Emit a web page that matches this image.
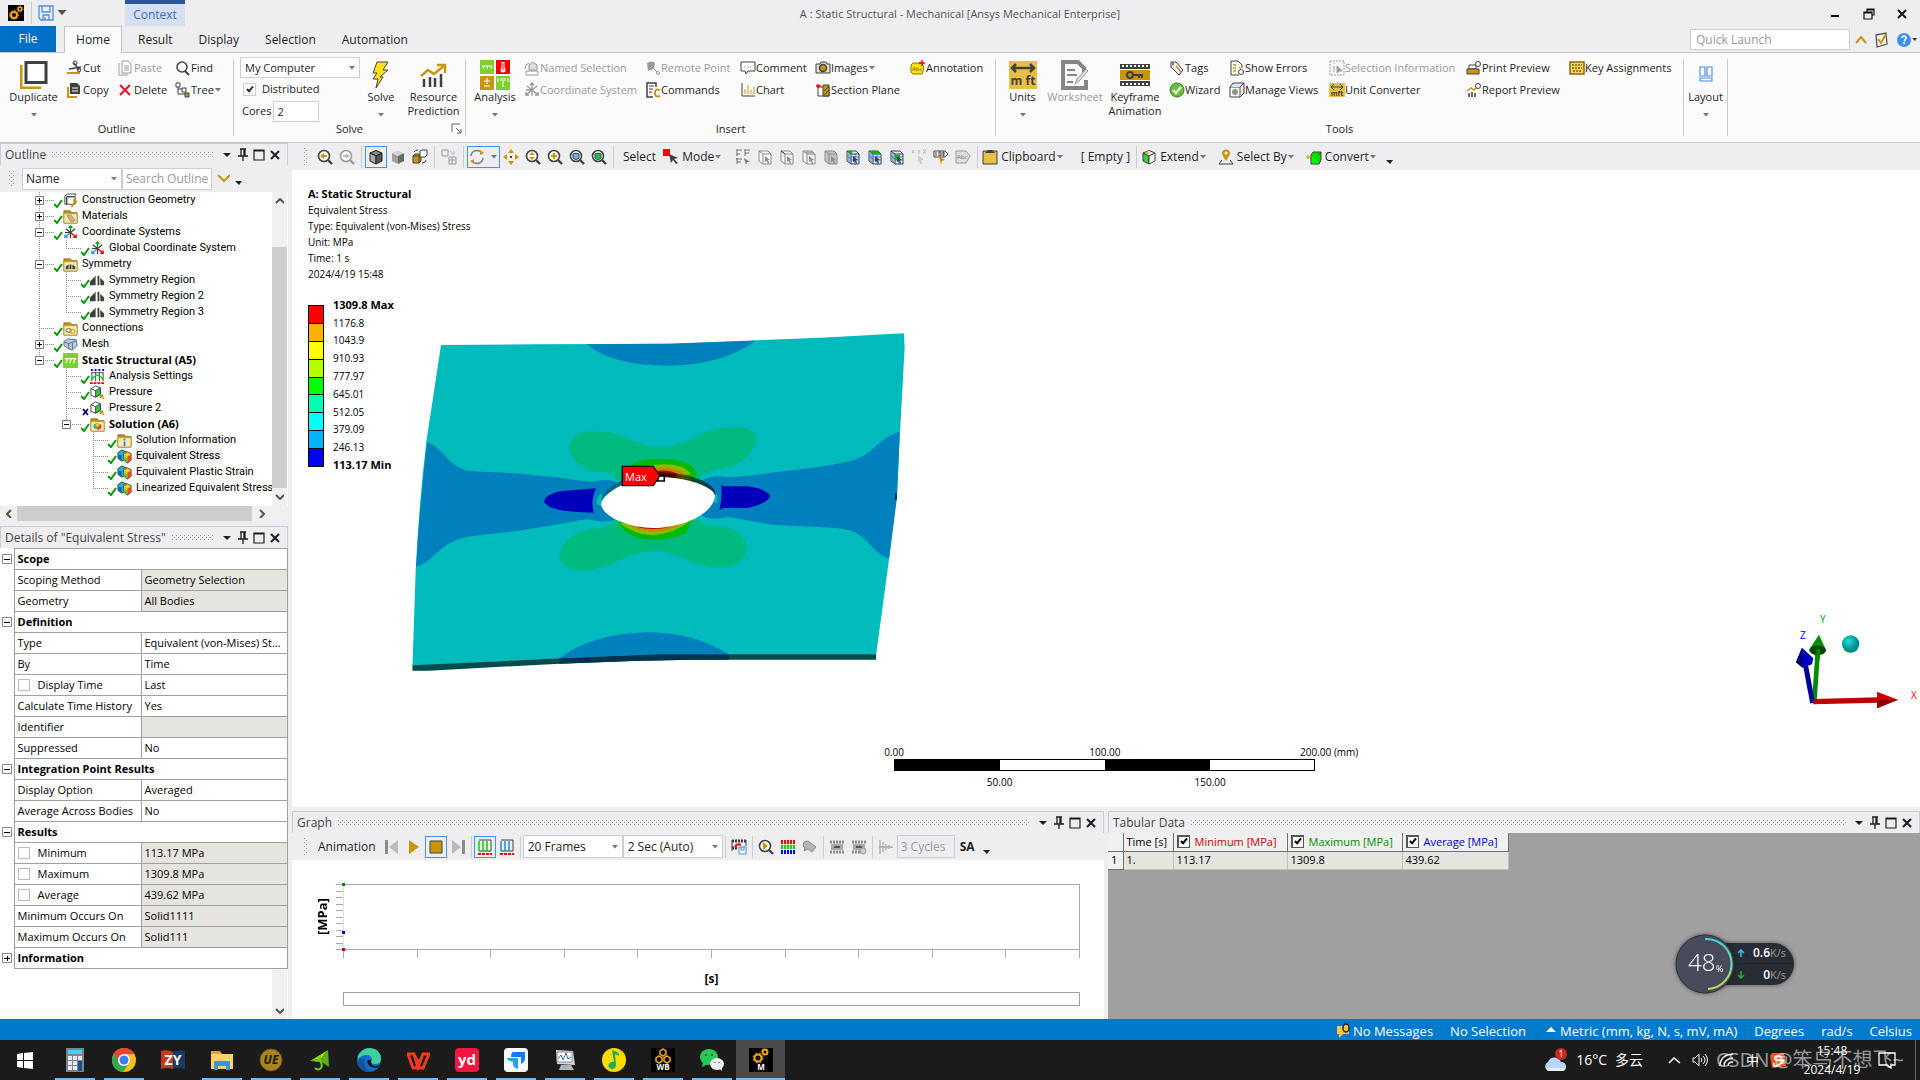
<!DOCTYPE html>
<html lang="en">
<head>
<meta charset="utf-8">
<title>A : Static Structural - Mechanical</title>
<style>
    html, body
    {
        height          : 100%;
        margin          : 0;
    }

    body
    {
        display         : flex;
        flex-direction  : column;
        overflow        : hidden;
        background      : #eeeef0;
        color           : #1e1e1e;
        font            : 11px/14px "Open Sans", "Noto Sans CJK SC", sans-serif;
    }

    main
    {
        flex            : 1;
        min-height      : 0;
        display         : grid;
        grid-template-columns : 288px minmax(0, 1fr);
    }

    .side, .work
    {
        display         : flex;
        flex-direction  : column;
        min-height      : 0;
    }

    .side { gap: 5px; }
    .side dock-panel:last-child { flex: 1; }
    .work { margin-left: 4px; }
    .work stress-view { flex: 1; }

    .bottom
    {
        height          : 208px;
        margin-top      : 4px;
        display         : grid;
        grid-template-columns : 1fr 1fr;
        gap             : 4px;
    }
</style>
</head>
<body>
<title-bar></title-bar>
<ribbon-bar>
    <ribbon-group label="Outline">
        <ribbon-stack style="width:67px"><ribbon-button big menu icon="duplicate">Duplicate</ribbon-button></ribbon-stack>
        <ribbon-stack style="width:51px"><ribbon-button icon="cut">Cut</ribbon-button><ribbon-button icon="copy">Copy</ribbon-button></ribbon-stack>
        <ribbon-stack style="width:57px"><ribbon-button off icon="paste">Paste</ribbon-button><ribbon-button icon="del">Delete</ribbon-button></ribbon-stack>
        <ribbon-stack style="width:58px"><ribbon-button icon="find">Find</ribbon-button><ribbon-button menu icon="tree">Tree</ribbon-button></ribbon-stack>
    </ribbon-group>
    <ribbon-group label="Solve" launcher>
        <solve-options></solve-options>
        <ribbon-stack style="width:42px"><ribbon-button big menu icon="solve">Solve</ribbon-button></ribbon-stack>
        <ribbon-stack style="width:63px"><ribbon-button big icon="resource">Resource Prediction</ribbon-button></ribbon-stack>
    </ribbon-group>
    <ribbon-group label="Insert">
        <ribbon-stack style="width:58px"><ribbon-button big menu icon="analysis">Analysis</ribbon-button></ribbon-stack>
        <ribbon-stack style="width:121px"><ribbon-button off icon="named">Named Selection</ribbon-button><ribbon-button off icon="coordOff">Coordinate System</ribbon-button></ribbon-stack>
        <ribbon-stack style="width:95px"><ribbon-button off icon="remote">Remote Point</ribbon-button><ribbon-button icon="commands">Commands</ribbon-button></ribbon-stack>
        <ribbon-stack style="width:75px"><ribbon-button icon="comment">Comment</ribbon-button><ribbon-button icon="chart">Chart</ribbon-button></ribbon-stack>
        <ribbon-stack style="width:95px"><ribbon-button menu icon="camera">Images</ribbon-button><ribbon-button icon="section">Section Plane</ribbon-button></ribbon-stack>
        <ribbon-stack style="width:85px"><ribbon-button icon="annot">Annotation</ribbon-button></ribbon-stack>
    </ribbon-group>
    <ribbon-group label="Tools">
        <ribbon-stack style="width:53px"><ribbon-button big menu icon="units">Units</ribbon-button></ribbon-stack>
        <ribbon-stack style="width:52px"><ribbon-button big off icon="worksheet">Worksheet</ribbon-button></ribbon-stack>
        <ribbon-stack style="width:68px"><ribbon-button big icon="keyframe">Keyframe Animation</ribbon-button></ribbon-stack>
        <ribbon-stack style="width:60px"><ribbon-button icon="tags">Tags</ribbon-button><ribbon-button icon="wizard">Wizard</ribbon-button></ribbon-stack>
        <ribbon-stack style="width:100px"><ribbon-button icon="errors">Show Errors</ribbon-button><ribbon-button icon="views">Manage Views</ribbon-button></ribbon-stack>
        <ribbon-stack style="width:137px"><ribbon-button off icon="selinfo">Selection Information</ribbon-button><ribbon-button icon="convertu">Unit Converter</ribbon-button></ribbon-stack>
        <ribbon-stack style="width:103px"><ribbon-button icon="print">Print Preview</ribbon-button><ribbon-button icon="report">Report Preview</ribbon-button></ribbon-stack>
        <ribbon-stack style="width:114px"><ribbon-button icon="keys">Key Assignments</ribbon-button></ribbon-stack>
    </ribbon-group>
    <ribbon-group label="">
        <ribbon-stack style="width:43px"><ribbon-button big menu icon="layout">Layout</ribbon-button></ribbon-stack>
    </ribbon-group>
</ribbon-bar>
<main>
    <div class="side">
        <dock-panel label="Outline"><outline-tree></outline-tree></dock-panel>
        <dock-panel label='Details of "Equivalent Stress"'><details-grid></details-grid></dock-panel>
    </div>
    <div class="work">
        <view-toolbar></view-toolbar>
        <stress-view></stress-view>
        <div class="bottom">
            <dock-panel label="Graph"><graph-view></graph-view></dock-panel>
            <dock-panel label="Tabular Data"><tabular-data></tabular-data></dock-panel>
        </div>
    </div>
</main>
<status-bar></status-bar>
<task-bar></task-bar>
<speed-meter></speed-meter>

<script>
const G = '#c8960c', K = '#404040', X = '#9a9a9a';
const lens = (inner, c = K) => `<circle cx="7" cy="7" r="5.5" fill="#fff" stroke="${c}" stroke-width="1.6"/><path d="M11 11l4 4" stroke="${c}" stroke-width="2.4"/>${inner}`;
const cube = (a, b, c, s = K) => `<path d="M2 4l6-2.500 6 2.500-6 3z" fill="${a}" stroke="${s}"/><path d="M2 4l6 3v8l-6-3z" fill="${b}" stroke="${s}"/><path d="M14 4l-6 3v8l6-3z" fill="${c}" stroke="${s}"/>`;
const folder = inner => `<path d="M1 4V2h7l1 2h6v11H1z" fill="#c8960c" stroke="#8a6808"/><path d="M1 5h14v10H1z" fill="#f8eab0" stroke="#b8a050"/>${inner}`;
const pick = (fill, extra = '', s = '#8c8c8c') => `<path d="M2 2h9l3 3v10H6l-4-3z" fill="${fill}" stroke="${s}"/><path d="M2 2l4 3h8M6 5v10" fill="none" stroke="${s}"/>${extra}<path d="M8 7l5 4h-2l1 3-1 1-1-3-2 1z" fill="${s}"/>`;
const mesh = extra => pick('#d8e8ff', `<path d="M10 5v10M6 8h8M6 11h8M4 4v9M2 7l4 3" stroke="#3a7bd5" fill="none"/>${extra}`, K);
const gears = `<path fill="#000" d="M0 0h16v16H0z"/><circle cx="6" cy="10" r="3" fill="none" stroke="#f5a81c" stroke-width="2"/><circle cx="6" cy="10" r="4.500" fill="none" stroke="#f5a81c" stroke-dasharray="1.500 1.500"/><circle cx="12" cy="4" r="1.800" fill="none" stroke="#f5a81c" stroke-width="1.500"/><circle cx="12" cy="4" r="3" fill="none" stroke="#f5a81c" stroke-dasharray="1 1"/>`;
const star = (a, b, c, d) => `<path d="M8 8V1M6 3l2-2 2 2" stroke="${a}" fill="none" stroke-width="1.500"/><path d="M8 8l6 5M14 10v3h-3" stroke="${b}" fill="none" stroke-width="1.500"/><path d="M8 8l-6 5M2 10v3h3" stroke="${c}" fill="none" stroke-width="1.500"/><path d="M8 8L3 4M8 8l5-4M8 8v6M8 8H2" stroke="${d}" stroke-width="1.300"/>`;

/* every glyph sits on a 16 x 16 grid unless its entry names another box */
const ICONS = {
    app       : gears,
    save      : `<path d="M1 1h14v14H3l-2-2zM4 1v6h8V1M5 15v-5h6v5M7 12v3" fill="none" stroke="#4a90e2" stroke-width="1.300"/>`,
    duplicate : [28, 28, `<path d="M1 4v23h20" fill="none" stroke="${G}" stroke-width="3"/><path d="M6 1.500h20v20H6z" fill="#fff" stroke="${K}" stroke-width="3"/>`],
    cut       : `<path d="M0 13h13" stroke="${G}" stroke-width="2"/><path d="M2 9l12-2M7 3l5 7" stroke="${K}" stroke-width="1.500"/><circle cx="8" cy="3" r="2" fill="none" stroke="${K}"/><circle cx="12" cy="10" r="1.800" fill="none" stroke="${K}"/>`,
    copy      : `<path d="M1 5v10h9" fill="none" stroke="${G}" stroke-width="2"/><path d="M3 1h7l3 3v8H3z" fill="${K}"/><path d="M5 6h6M5 9h6" stroke="#fff"/>`,
    paste     : `<path d="M1 3v12h9" fill="none" stroke="#ccc" stroke-width="2"/><path d="M4 1h6l3 3v9H4z" fill="#fff" stroke="${X}"/><path d="M6 6h5M6 8h5M6 10h5" stroke="${X}"/>`,
    del       : `<path d="M2 3l10 10M12 3L2 13" stroke="#e81123" stroke-width="2"/>`,
    find      : `<circle cx="7" cy="7" r="5" fill="none" stroke="${K}" stroke-width="1.500"/><path d="M10 11l4 4" stroke="${K}" stroke-width="2"/>`,
    tree      : `<path d="M3 3v9h8M3 7h5" fill="none" stroke="${K}"/><path d="M1 1h4v4H1zM7 6h4v4H7z" fill="#fff" stroke="${K}"/><path d="M10 11h4v4h-4z" fill="${G}" stroke="${K}"/>`,
    solve     : [24, 28, `<path d="M8 1h11l-5 8h5l-8 7h3L7 27l2-9H4l4-6H4z" fill="#ffe11a" stroke="${K}"/>`],
    resource  : [28, 28, `<path d="M4 26v-8M10 26V16M15 26V17M21 26V13" stroke="${K}" stroke-width="2.500"/><path d="M1 15l7-6 6 4L25 4M17 4h8v8" fill="none" stroke="${G}" stroke-width="2.500"/>`],
    analysis  : [32, 30, `<path fill="#7bd12f" d="M1 0h14v14H1zM17 16h14v14H17z"/><path fill="#f80000" d="M17 0h14v14H17z"/><path fill="${G}" d="M1 16h14v14H1z"/><path d="M3 6h10M5 6l-1 3M9 6L8 9M13 6l-1 3M5 21h6M8 18v6M5 26h6M19 18v4M22 18v3M26 18v3M29 18v4M24 18v9" stroke="#fff" fill="none"/><path d="M24 2v7" stroke="#fff" stroke-width="3"/><circle cx="24" cy="10" r="2.500" fill="#fff"/><path d="M24 3v7" stroke="#f80000"/>`],
    named     : `<path d="M5 5l4-3 4 3v5H5z" fill="#ddd" stroke="${X}"/><path d="M2 11h12v4H2z" fill="#fff" stroke="${X}"/><path d="M1 9q0-5 4-6" fill="none" stroke="${X}"/>`,
    coordOff  : star(X, X, X, X),
    remote    : `<path d="M2 3q5-3 8 0L9 9l-6 2z" fill="${X}"/><path d="M8 8l4 4" stroke="${X}"/><circle cx="13" cy="13" r="1.500" fill="none" stroke="${X}"/>`,
    commands  : `<path d="M8 15H2V1h9v4" fill="none" stroke="${K}" stroke-width="1.500"/><path d="M4 4h5M4 7h4M4 10h3" stroke="${K}"/><path d="M15 8q-5-2-5 3t5 3" fill="none" stroke="${G}" stroke-width="2"/>`,
    comment   : `<path d="M1 2h14v9H8l-2 3-1-3H1z" fill="#fff" stroke="${K}"/><path d="M4 7h8" stroke="${G}" stroke-dasharray="1 2"/>`,
    chart     : `<path d="M2 1v13h13" fill="none" stroke="${K}"/><path d="M5 12V7M8 12V3M11 12V8M14 12V5" stroke="${G}"/>`,
    camera    : `<path d="M1 4h4l1-2h5l1 2h3v9H1z" fill="#ddd" stroke="${K}"/><circle cx="8" cy="8" r="3.500" fill="${G}" stroke="${K}" stroke-width="1.500"/>`,
    section   : `<path d="M3 5h11v9H3z" fill="#fff" stroke="${K}"/><path d="M8 3h6v11H8z" fill="${G}" stroke="${K}"/><path d="M9 9l5-5M9 13l5-5" stroke="${K}"/><path d="M1 4h5M3 2v4" stroke="#f00" stroke-width="1.500"/>`,
    annot     : `<path d="M1 5l2-2h9l2 5-2 6H3l-2-2z" fill="#fce205" stroke="#8a7a00"/><path d="M9 3h6M12 0v6" stroke="#f00" stroke-width="1.500"/><text x="2" y="11" font-size="6" fill="#665500">Abc</text>`,
    units     : [28, 28, `<path fill="#e8bf45" d="M0 0h28v28H0z"/><path d="M3 7h22M7 3L3 7l4 4M21 3l4 4-4 4" fill="none" stroke="${K}" stroke-width="2.500"/><text x="14" y="24" text-anchor="middle" font-size="12" font-weight="700" fill="${K}">m ft</text>`],
    worksheet : [30, 30, `<path d="M26 20v8H3V2h15l6 6v5" fill="none" stroke="#858585" stroke-width="4"/><path d="M7 10h8M7 15h10M7 22h6" stroke="#858585" stroke-width="2"/><path d="M15 24l2-5 9-10 2 2-9 10z" fill="#ddd" stroke="${X}"/>`],
    keyframe  : [30, 28, `<path fill="${K}" d="M0 3h30v5H0zM0 20h30v5H0z"/><path fill="${G}" d="M0 9h30v10H0z"/><path d="M2 5h27M2 23h27" stroke="#fff" stroke-width="2" stroke-dasharray="2 2"/><circle cx="10" cy="14" r="3" fill="none" stroke="${K}" stroke-width="2"/><path d="M13 14h9v3M19 14v3" fill="none" stroke="${K}" stroke-width="2"/>`],
    tags      : `<path d="M2 2h5l7 8-4 5-8-8z" fill="#eee" stroke="${K}"/><path d="M7 6l5 6" stroke="${G}" stroke-width="1.500"/><circle cx="4" cy="4" r="1" fill="${K}"/>`,
    wizard    : `<circle cx="8" cy="8" r="7" fill="#6abf3a" stroke="#3d7a1c"/><path d="M4 8l3 3 5-6" fill="none" stroke="#fff" stroke-width="2"/>`,
    errors    : `<path d="M10 15H2V1h7l4 4v3" fill="#fff" stroke="${K}"/><path d="M4 5h3M4 8h3M4 11h3" stroke="${G}" stroke-width="1.500"/><circle cx="12" cy="12" r="2.500" fill="#fff" stroke="${K}"/><path d="M10 7l3 3" stroke="${G}"/>`,
    views     : `<path d="M1 5h10v10H1z" fill="#fff" stroke="${K}"/><path d="M1 5l3-4h11l-4 4M15 1v10l-4 4" fill="#d8e6f8" stroke="${K}"/><circle cx="6" cy="10" r="2.500" fill="${G}" stroke="#4a90e2"/>`,
    selinfo   : `<path d="M1 1h14v14H1z" fill="none" stroke="${X}" stroke-dasharray="2 1"/><path d="M5 6v6M5 3v1M8 6l5 5h-3l-2 2z" stroke="${X}" fill="${X}"/>`,
    convertu  : `<path fill="#e8bf45" d="M0 1h16v14H0z"/><path d="M2 5h12M5 2L2 5l3 3M11 2l3 3-3 3" fill="none" stroke="${K}"/><text x="8" y="14" text-anchor="middle" font-size="7" font-weight="700" fill="${K}">mft</text>`,
    print     : `<path d="M3 5h7v4H3z" fill="#fff" stroke="${K}"/><path d="M1 9h12v5H1z" fill="${G}" stroke="${K}"/><circle cx="12" cy="4" r="2.500" fill="#fff" stroke="${K}"/>`,
    report    : `<path d="M3 15v-4M6 15v-5M9 15v-4" stroke="${K}" stroke-width="1.500"/><path d="M1 9l4-3 3 2 5-5" fill="none" stroke="${G}" stroke-width="1.500"/><circle cx="12" cy="4" r="2.500" fill="#fff" stroke="${K}"/>`,
    keys      : `<path d="M1 2h14v12H1z" fill="#f5d06a" stroke="#8a6808" stroke-width="1.500"/><path d="M3 5h10M3 8h10M4 11h8" stroke="#8a6808" stroke-width="1.500" stroke-dasharray="2 1"/>`,
    layout    : [28, 28, `<path d="M8 6h5v9H8zM15 6h5v9h-5zM8 17h12v3H8z" fill="none" stroke="#4a90e2" stroke-width="1.200"/>`],
    launcher  : `<path d="M3 12V4h8M7 8l5 5M12 9v4H8" fill="none" stroke="#666"/>`,
    caret     : [8, 8, `<path d="M1 2h6L4 5.500z" fill="currentColor"/>`],
    pin       : `<path d="M5 2h6M6 2v7M10 2v7M9 2v7M3 9h10M8 9v5" stroke="currentColor" fill="none" stroke-width="1.300"/>`,
    box       : `<path d="M3 3h10v10H3zM3 4h10" fill="none" stroke="currentColor" stroke-width="1.200"/>`,
    close     : `<path d="M4 4l8 8M12 4l-8 8" stroke="currentColor" stroke-width="2"/>`,
    drop      : `<path d="M4 6h8l-4 4z" fill="currentColor"/>`,
    zback     : lens(`<path d="M3 7l4-3v2h3v2H7v2z" fill="${G}"/>`),
    zfwd      : lens(`<path d="M11 7L7 4v2H4v2h3v2z" fill="#bbb"/>`, '#999'),
    shaded    : cube('#888', '#aaa', '#555', '#222'),
    shaded2   : cube('#d4d4d4', '#a0a0a0', '#6a6a6a', 'none'),
    random    : `<path d="M1 7l2-2h6v7l-2 2H1z" fill="${G}" stroke="${K}"/><path d="M1 7h6v7M7 7l2-2" fill="none" stroke="${K}"/><path d="M8 2l2-1h5v5l-2 2H8z" fill="#fff" stroke="${K}"/><path d="M2 3q1-2 4-2M10 14q4 0 4-3" fill="none" stroke="${K}"/>`,
    layers    : `<path d="M1 1h6v6H1zM8 8h7v7H8zM11 8v7M8 11h7" fill="none" stroke="${X}"/><path d="M9 2l4 3M13 2v3h-3" stroke="#bbb" fill="none"/>`,
    rotate    : `<path d="M2 7A6 6 0 0 1 12 3M14 9A6 6 0 0 1 4 13" fill="none" stroke="#777" stroke-width="1.500"/><path d="M11 1l4 3-4 2zM5 15l-4-3 4-2z" fill="${G}"/>`,
    pan       : `<path d="M8 0l3 4H5zM8 16l3-4H5zM0 8l4-3v6zM16 8l-4-3v6z" fill="${G}"/><path d="M7 7h2v2H7z" fill="${K}"/>`,
    zoom      : lens(`<path d="M7 3l3 3H4zM7 11l3-3H4z" fill="${G}"/>`),
    zin       : lens(`<path d="M7 4v6M4 7h6" stroke="${G}" stroke-width="2"/>`),
    zfit      : lens(`<path d="M4 5l3-1 3 1v4l-3 2-3-2z" fill="#7aa6dc" stroke="#345"/>`),
    zsel      : lens(`<path d="M4 5l3-1 3 1v4l-3 2-3-2z" fill="#22c14c" stroke="#253"/>`),
    mode      : `<path fill="#f00" d="M0 0h7v7H0z"/><path d="M6 5l9 4-4 1 4 4-2 1-3-4-2 3z" fill="${K}"/>`,
    pickAll   : `<path d="M1 1h6M1 5h4M2 1v6M9 1h6M10 1v6M10 4h4M1 10h6M2 9v6M2 13h4" stroke="#777" fill="none"/><path d="M9 9l6 4h-3l-1 3z" fill="#777"/>`,
    pick1     : pick('#fafafa'),
    pick2     : pick('#f2f2f2', `<path d="M2 2l4 3" stroke="${K}"/>`),
    pick3     : pick('#f2f2f2', `<path d="M2 2h9l3 3H6z" fill="#aaa"/>`),
    pick4     : pick('#c2c2c2'),
    mesh1     : mesh(`<path fill="#0b0" d="M2 2h5v3H5z"/>`),
    mesh2     : mesh(`<path fill="#0b0" d="M2 2h9l3 3H6z"/>`),
    mesh3     : mesh(`<path fill="#0b0" d="M6 6h5v5H6z"/>`),
    xyz       : `<path d="M1 1l2 3M3 1L1 4M7 1l1 2 1-2M8 3v2M12 1h3l-3 3h3" fill="none" stroke="#bbb"/><path d="M7 6l6 5h-3l1 4h-2l-1-3-1 1z" fill="#ccc"/>`,
    label     : `<path d="M1 2h11l3 3-3 3H1z" fill="#fff" stroke="${K}"/><path d="M3 3v4M6 3h2v4H6zM10 3h1v4h-1z" stroke="${K}" fill="none"/><path d="M6 7l6 4-3 1-1 4z" fill="${G}"/>`,
    abc       : `<path d="M1 2h10l4 5-4 7H1z" fill="#ddd" stroke="${X}"/><text x="2" y="10" font-size="6" fill="#777">Abc</text>`,
    clipboard : `<path d="M1 2h14v13H1z" fill="#e8bf45" stroke="${K}"/><path d="M3 4l3-3h4l3 3z" fill="${K}"/>`,
    extend    : cube('#fff', '#2fce3f', '#fff') + `<path d="M4 4h5M6 2v4" stroke="${G}"/>`,
    selectby  : `<path d="M8 12Q4 6 4 4a4 3.500 0 0 1 8 0q0 2-4 8z" fill="${G}"/><circle cx="8" cy="4" r="1.500" fill="#fff"/><path d="M4 11l-3 4h14l-3-4" fill="none" stroke="${K}"/>`,
    convert   : `<path d="M5 6h8v9H5z" fill="#0f0" stroke="${K}"/><path d="M5 6l2-3h8v8l-2 4M13 6l2-3" fill="#0d0" stroke="${K}"/><path d="M0 8h5M2 6v4" stroke="${G}"/>`,
    prev      : `<path fill="#8c8c8c" d="M1 1h3v14H1z"/><path fill="#bbb" d="M14 1v14L5 8z"/>`,
    play      : `<path fill="${G}" d="M3 1l10 7-10 7z"/>`,
    stop      : `<path fill="${G}" stroke="${K}" d="M2 2h12v12H2z"/>`,
    next      : `<path fill="#bbb" d="M2 1l9 7-9 7z"/><path fill="#8c8c8c" d="M12 1h3v14h-3z"/>`,
    barsG     : `<path d="M2 1h12M14 1v11H2" stroke="${K}" fill="none"/><path d="M2 2v10M6 2v10M10 2v10" stroke="#00d800" stroke-width="1.500"/><path d="M1 15h14" stroke="#f00" stroke-width="2" stroke-dasharray="3 1"/>`,
    barsB     : `<path d="M2 1h12M14 1v11H2" stroke="${K}" fill="none"/><path d="M2 2v10M6 2v10M10 2v10" stroke="#1c8be0" stroke-width="1.500"/><path d="M1 15h14" stroke="#f00" stroke-width="2" stroke-dasharray="3 1"/>`,
    export    : `<path d="M1 2h14M1 9h5" stroke="${K}" stroke-width="3" stroke-dasharray="2 1"/><path d="M1 1v11M15 1v6" stroke="${K}"/><path d="M4 8q2-4 6-2" stroke="#f00" fill="none" stroke-width="2"/><path d="M8 8h7v7H8zM10 8v3h3V8" fill="#fff" stroke="#4a90e2"/>`,
    zplay     : lens(`<path d="M5 3l5 4-5 4z" fill="${G}"/>`),
    grid3     : `<path d="M1 3h14" stroke="#f00" stroke-width="4" stroke-dasharray="2 1"/><path d="M1 8h14" stroke="#0d0" stroke-width="4" stroke-dasharray="2 1"/><path d="M1 13h14" stroke="#00f" stroke-width="4" stroke-dasharray="2 1"/>`,
    probe     : `<path d="M2 3l4-1 8 6-4 5-4-3-4 2 1-3-2-2z" fill="#b5b5b5" stroke="#888"/>`,
    film      : `<path d="M1 3h14M1 13h14" stroke="#8c8c8c" stroke-width="3" stroke-dasharray="2 1"/><path fill="#aaa" d="M2 5h12v6H2z"/><path d="M5 8h6" stroke="#555" stroke-width="2"/>`,
    filmkey   : `<path d="M1 3h14M1 13h8" stroke="#8c8c8c" stroke-width="3" stroke-dasharray="2 1"/><path fill="#aaa" d="M2 5h12v6H2z"/><path d="M5 8h6" stroke="#555" stroke-width="2"/><circle cx="12" cy="12" r="3" fill="#ccc" stroke="#999"/>`,
    cycles    : `<path d="M2 1v14M1 8h14M5 3v10M8 5v6M11 6v4" stroke="#aaa" stroke-width="1.300"/>`,
    geom      : `<path d="M2 3l3-2h9l-2 3H4v8H2zM4 4h9v8H4z" fill="#fff" stroke="${K}"/><path d="M9 15l4-6M12 6v3h3" stroke="${G}" stroke-width="2" fill="none"/>`,
    materials : folder(`<path d="M4 7l4-1 5 6-4 2z" fill="#e0a878" stroke="#996"/>`),
    coords    : star('#0a0', '#e00', '#39f', K),
    symfolder : folder(`<path fill="${K}" d="M3 13v-3l3-2v5zM7 8h2v5H7zM10 8l3 2v3h-3z"/>`),
    symregion : `<path fill="${K}" d="M0 13V9l6-6v10zM8 3h2v10H8zM11 5l4 4v4h-4z"/>`,
    connect   : folder(`<ellipse cx="6" cy="10" rx="3" ry="2" fill="none" stroke="#665"/><ellipse cx="10" cy="11" rx="3" ry="2" fill="none" stroke="${G}"/>`),
    mesh      : `<path d="M1 5l4-3 9 1 1 6-5 5-5-2-4-3z" fill="#b9cfe8" stroke="#567"/><path d="M1 5l5 2v6M6 7l8-3M10 6v7" fill="none" stroke="#567"/>`,
    structural: `<path fill="#7bd12f" d="M0 0h16v16H0z"/><path d="M2 6h12M5 6l-2 5M9 6l-2 5M13 6l-2 5" stroke="#fff" stroke-width="1.300"/>`,
    settings  : `<path d="M2 3v10M6 3v10M10 3v10M14 3v10M2 4h12" stroke="${K}"/><path d="M2 11q6-9 12 0" fill="none" stroke="#0c0" stroke-width="1.500"/><path d="M1 1h14" stroke="#00f" stroke-width="2" stroke-dasharray="2 2"/><path d="M0 15h16" stroke="#e00" stroke-width="2" stroke-dasharray="3 1"/>`,
    pressure  : `<path d="M1 4l5-3 5 2v7l-5 3-5-2z" fill="#fff" stroke="${K}"/><path d="M6 6l5-3v7l-5 3z" fill="#2fce3f" stroke="${K}"/><path d="M1 4l5 2" stroke="${K}"/><path d="M15 15l-4-4M11 14v-3h3" stroke="${G}" fill="none" stroke-width="1.500"/>`,
    solution  : folder(`<path fill="#2a9" d="M4 8l4-2v7l-4-1z"/><path fill="#e33" d="M8 7l4 1v4l-4 2z"/><path fill="#f1d020" d="M6 7h4v3H6z"/>`),
    info      : folder(`<path d="M8 6v2M8 9v5" stroke="#2a8cff" stroke-width="2"/>`),
    result    : `<path d="M1 4l4-3 5 2v8l-5 2-4-3z" fill="#18b8d0" stroke="${K}"/><path d="M7 5l4-2 4 2v7l-4 3-4-3z" fill="#f1d020" stroke="${K}"/><path d="M11 8v7l4-3V6z" fill="#ea4a20"/><path d="M2 6l3 1v5l-3-2z" fill="#1b50d8"/><path d="M7 8l4 2v4l-4-2z" fill="#5cc838"/>`,
    ok        : [9, 9, `<path d="M0 5l3 3 5-7" fill="none" stroke="#0a960a" stroke-width="2"/>`],
    bad       : [9, 9, `<path d="M2 2l5 6M7 2L2 8" stroke="#00007a" stroke-width="1.800"/>`]
};

function icon(name, w, h)
{
    const def = ICONS[name];
    const [bw, bh, body] = Array.isArray(def) ? def : [16, 16, def];
    return `<svg width="${w || bw}" height="${h || bh}" viewBox="0 0 ${bw} ${bh}" aria-hidden="true">${body}</svg>`;
}

const RESET = `
    :host, *, *::before { box-sizing: border-box; }
    svg { display: block; flex: none; }
    button, input, select { font: inherit; color: inherit; }
    button { border: 0; padding: 0; background: none; }
    input, select { border: 1px solid #ccccdb; border-radius: 0; background: #fff; outline: 0; }
    select { appearance: none; }
`;

class Part extends HTMLElement
{
    connectedCallback()
    {
        if (this.shadowRoot) return;
        this.attachShadow({mode:"open"}).innerHTML = `<style>${RESET}</style>` + this.render();
    }
}

class TitleBar extends Part
{
    render()
    {
        return `
        <style>
            :host { display: block; height: 53px; flex: none; border-bottom: 1px solid #c6c6ca; background: #eeeef0; }
            .top { height: 26px; display: grid; grid-template-columns: 125px 60px 1fr 112px; align-items: center; }
            .quick { display: flex; align-items: center; padding-left: 8px; height: 22px; color: #555; }
            .quick i { width: 1px; height: 22px; background: #ccc; margin: 0 6px 0 7px; }
            .quick .save { margin-right: 2px; }
            .context { align-self: stretch; background: #d5dff1; border-top: 4px solid #2b579a; color: #3a6ab8; text-align: center; line-height: 22px; font-size: 12px; }
            .name { text-align: center; color: #555; padding: 2px 73px 0 0; }
            .win { display: flex; justify-content: space-between; padding: 2px 10px 0 19px; color: #111; }
            .row { display: flex; height: 27px; }
            .row button { height: 27px; font-size: 12px; }
            .tabs { display: flex; flex: 1; gap: 26px; }
            .tabs .file { background: #0070c6; color: #fff; width: 56px; height: 26px; margin-right: -18px; }
            .tabs .home { background: #fbfbfb; border: 1px solid #c6c6ca; border-bottom: 0; width: 58px; margin-right: -10px; }
            .launch { display: flex; align-items: center; gap: 5px; padding-right: 3px; }
            .launch input { width: 160px; height: 21px; padding: 0 5px; font-size: 12px; }
            input::placeholder { color: #999; opacity: 1; }
        </style>
        <div class="top">
            <div class="quick">${icon('app')}<i></i><button class="save" aria-label="Save">${icon('save')}</button>${icon('caret', 12, 12)}</div>
            <div class="context">Context</div>
            <div class="name">A : Static Structural - Mechanical [Ansys Mechanical Enterprise]</div>
            <div class="win">
                <button aria-label="Minimize"><svg width="16" height="16"><path d="M4 10h8" stroke="#111" stroke-width="2"/></svg></button>
                <button aria-label="Restore"><svg width="16" height="16"><path d="M6 6V3h7v6h-2M3 6h8v7H3zM3 7h8M6 4h7" fill="none" stroke="#111" stroke-width="1.200"/></svg></button>
                <button aria-label="Close">${icon('close')}</button>
            </div>
        </div>
        <div class="row">
            <nav class="tabs"><button class="file">File</button><button class="home">Home</button><button>Result</button><button>Display</button><button>Selection</button><button>Automation</button></nav>
            <div class="launch">
                <input placeholder="Quick Launch" aria-label="Quick Launch">
                <svg width="12" height="12"><path d="M1 9l5-6 5 6" fill="none" stroke="#c8960c" stroke-width="2"/></svg>
                <svg width="18" height="16"><path d="M4 3l10-2 1 11-10 3z" fill="none" stroke="#555" stroke-width="1.300"/><path d="M6 7l3 4 5-9" fill="none" stroke="#c8960c" stroke-width="2"/></svg>
                <svg width="22" height="16" viewBox="0 0 22 16"><circle cx="9" cy="8" r="7" fill="#3f8ff0"/><path d="M7 6q0-2 2-2t2 2q0 1-2 3M9 10v2" fill="none" stroke="#fff" stroke-width="1.600"/><path d="M17 6h5l-2 3z" fill="#333"/></svg>
            </div>
        </div>`;
    }
}

class RibbonBar extends Part
{
    render()
    {
        return `
        <style>
            :host { display: flex; height: 90px; flex: none; background: #fbfbfb; border-bottom: 1px solid #c6c6ca; }
        </style>
        <slot></slot>`;
    }
}

class RibbonGroup extends Part
{
    render()
    {
        const label = this.getAttribute('label');
        return `
        <style>
            :host { display: flex; flex-direction: column; position: relative; margin: 6px 0; border-right: 1px solid #c9c9cf; }
            .items { display: flex; height: 62px; }
            .label { text-align: center; line-height: 14px; margin-top: 1px; }
            .launcher { position: absolute; right: 0; bottom: 0; }
        </style>
        <div class="items"><slot></slot></div>
        <div class="label">${label}</div>
        ${this.hasAttribute('launcher') ? `<button class="launcher" aria-label="Open ${label} settings">${icon('launcher')}</button>` : ''}`;
    }
}

class RibbonStack extends Part
{
    render()
    {
        return `
        <style>
            :host { display: flex; flex-direction: column; margin-top: -2px; }
        </style>
        <slot></slot>`;
    }
}

class RibbonButton extends Part
{
    render()
    {
        const big = this.hasAttribute('big');
        const menu = this.hasAttribute('menu') ? `<i>${icon('caret')}</i>` : '';
        return `
        <style>
            :host { display: block; }
            button { display: flex; align-items: center; height: 22px; white-space: nowrap; }
            button.big { width: 100%; height: auto; padding-top: 3px; flex-direction: column; white-space: normal; text-align: center; }
            .pic { height: 30px; display: flex; align-items: center; }
            .big i { margin-top: 7px; }
            i { color: #777; }
            button:disabled { color: #9a9a9a; }
        </style>
        <button class="${big ? 'big' : ''}" ${this.hasAttribute('off') ? 'disabled' : ''}>
            <div class="pic">${icon(this.getAttribute('icon'))}</div>
            <span><slot></slot></span>${menu}
        </button>`;
    }
}

class SolveOptions extends Part
{
    render()
    {
        return `
        <style>
            :host { display: block; width: 126px; padding-left: 6px; margin-top: -2px; }
            .combo { position: relative; }
            select { width: 120px; height: 21px; padding: 0 4px; display: block; }
            .combo svg { position: absolute; right: 4px; top: 7px; color: #777; }
            label { display: flex; align-items: center; height: 22px; gap: 6px; }
            .tick { appearance: none; width: 13px; height: 13px; margin: 0 0 0 3px; position: relative; }
            .tick::before { content: ""; position: absolute; left: 4px; top: 1px; width: 4px; height: 7px; border: solid #333; border-width: 0 2px 2px 0; rotate: 40deg; }
            .cores { gap: 2px; padding-left: 2px; }
            .cores input { width: 46px; height: 21px; padding: 0 3px; }
        </style>
        <div class="combo"><select aria-label="Solve process settings"><option>My Computer</option></select>${icon('caret')}</div>
        <label><input class="tick" type="checkbox" checked>Distributed</label>
        <label class="cores">Cores <input value="2"></label>`;
    }
}

class DockPanel extends Part
{
    render()
    {
        return `
        <style>
            :host { display: flex; flex-direction: column; min-width: 0; min-height: 0; }
            header { height: 22px; flex: none; display: flex; align-items: center; border: 1px solid #ccccdb; border-bottom: 0; padding: 0 4px; color: #444; font-size: 12px; }
            .dots
            {
                flex: 1; height: 5px; margin: 0 5px 0 6px;
                background: conic-gradient(from 270deg at 1px 1px, #999 90deg, transparent 0) 0 0 / 4px 4px,
                            conic-gradient(from 270deg at 1px 1px, #999 90deg, transparent 0) 2px 2px / 4px 4px;
            }
            button { color: #1e1e1e; width: 16px; }
            .body { flex: 1; min-height: 0; display: flex; flex-direction: column; }
        </style>
        <header>${this.getAttribute('label')}<div class="dots"></div>
            <button aria-label="Options">${icon('drop')}</button><button aria-label="Auto hide">${icon('pin')}</button><button aria-label="Maximize">${icon('box')}</button><button aria-label="Close">${icon('close')}</button>
        </header>
        <div class="body"><slot></slot></div>`;
    }
}

/* level, label, icon, expander, bold */
const TREE = [
    [0, 'Construction Geometry', 'geom', '+'],
    [0, 'Materials', 'materials', '+'],
    [0, 'Coordinate Systems', 'coords', '-'],
    [1, 'Global Coordinate System', 'coords'],
    [0, 'Symmetry', 'symfolder', '-'],
    [1, 'Symmetry Region', 'symregion'],
    [1, 'Symmetry Region 2', 'symregion'],
    [1, 'Symmetry Region 3', 'symregion'],
    [0, 'Connections', 'connect'],
    [0, 'Mesh', 'mesh', '+'],
    [0, 'Static Structural (A5)', 'structural', '-', true],
    [1, 'Analysis Settings', 'settings'],
    [1, 'Pressure', 'pressure'],
    [1, 'Pressure 2', 'pressure'],
    [1, 'Solution (A6)', 'solution', '-', true],
    [2, 'Solution Information', 'info'],
    [2, 'Equivalent Stress', 'result'],
    [2, 'Equivalent Plastic Strain', 'result'],
    [2, 'Linearized Equivalent Stress', 'result']
];

class OutlineTree extends Part
{
    isLast(index, level)
    {
        for (let i = index + 1; i < TREE.length; i++)
        {
            if (TREE[i][0] < level) return true;
            if (TREE[i][0] === level) return false;
        }
        return true;
    }

    row([level, label, pic, exp, bold], index)
    {
        const w = 54 + 27 * level;
        let lines = '';
        for (let l = 0; l <= level; l++)
        {
            const x = 39 + 27 * l, last = this.isLast(index, l);
            if (l === level || !last) lines += `M${x}.5 0V${last ? 8 : 16}`;
        }
        const x = 39 + 27 * level;
        const box = exp ? `<path d="M${x - 4}.5 4.500h8v8h-8z" fill="#fff" stroke="#777"/><path d="M${x - 2} 8.500h5${exp === '+' ? `M${x}.5 6v5` : ''}" stroke="#000"/>` : '';
        return `<li class="${bold ? 'bold' : ''} ${label === 'Equivalent Stress' ? 'sel' : ''}">
            <svg width="${w}" height="16"><path d="${lines}M${x} 8.500H${w}" stroke="#888" stroke-dasharray="1 1" fill="none"/>${box}</svg>
            <b>${icon(label === 'Pressure 2' ? 'bad' : 'ok')}</b>${icon(pic, 15, 15)}<span>${label}</span></li>`;
    }

    render()
    {
        return `
        <style>
            :host { display: block; }
            .tools { height: 27px; display: flex; align-items: center; padding-left: 22px; font-size: 12px; position: relative; }
            .grip { position: absolute; left: 9px; top: 6px; width: 6px; height: 16px; background: conic-gradient(from 270deg at 1px 1px, #999 90deg, transparent 0) 0 0 / 4px 4px, conic-gradient(from 270deg at 1px 1px, #999 90deg, transparent 0) 2px 2px / 4px 4px; }
            .combo { position: relative; }
            select { width: 100px; height: 22px; padding: 0 3px; display: block; }
            .combo svg { position: absolute; right: 4px; top: 7px; color: #777; }
            .tools input { width: 90px; height: 22px; padding: 0 3px; }
            input::placeholder { color: #999; opacity: 1; }
            .tools > svg { margin-left: 5px; }
            .view { display: grid; grid-template-columns: 272px 15px; background: #fff; }
            ul { margin: 0; padding: 0; list-style: none; height: 314px; overflow: hidden; font-family: Roboto, sans-serif; color: #000; }
            li { display: flex; align-items: center; height: 16px; white-space: nowrap; }
            li b { margin-top: 7px; }
            li span { margin-left: 2px; padding: 0 2px; line-height: 16px; }
            .bold span { font-family: "Open Sans", sans-serif; font-weight: 700; }
            .sel span { background: #f0f0f0; }
            .bar { background: #f0f0f0; display: flex; flex-direction: column; justify-content: space-between; align-items: center; padding: 6px 0; }
            .bar div { width: 15px; height: 241px; background: #cdcdcd; margin-top: 36px; }
            .hbar { height: 15px; display: grid; grid-template-columns: 17px 235px 20px; align-items: center; justify-items: center; background: #f0f0f0; }
            .hbar div { background: #cdcdcd; align-self: stretch; justify-self: stretch; }
        </style>
        <div class="tools">
            <i class="grip"></i>
            <div class="combo"><select aria-label="Filter by"><option>Name</option></select>${icon('caret')}</div>
            <input placeholder="Search Outline" aria-label="Search Outline">
            <svg width="13" height="10"><path d="M1 1l6 6 6-6" fill="none" stroke="#c8960c" stroke-width="2"/></svg>
            <svg width="8" height="16"><path d="M0 10h7l-3 4z" fill="#222"/></svg>
        </div>
        <div class="view">
            <ul>${TREE.map((r, i) => this.row(r, i)).join('')}</ul>
            <div class="bar"><svg width="9" height="6"><path d="M1 5l4-4 4 4" fill="none" stroke="#555" stroke-width="2"/></svg><div></div><svg width="9" height="6"><path d="M1 1l4 4 4-4" fill="none" stroke="#555" stroke-width="2"/></svg></div>
        </div>
        <div class="hbar"><svg width="6" height="9"><path d="M5 1L1 5l4 4" fill="none" stroke="#555" stroke-width="2"/></svg><div></div><svg width="6" height="9"><path d="M1 1l4 4-4 4" fill="none" stroke="#555" stroke-width="2"/></svg></div>`;
    }
}

/* section rows hold one string; the rest are name, value, flags: g = grey value, c = tick box */
const DETAILS = [
    ['Scope'],
    ['Scoping Method', 'Geometry Selection', 'g'],
    ['Geometry', 'All Bodies', 'g'],
    ['Definition'],
    ['Type', 'Equivalent (von-Mises) St...', ''],
    ['By', 'Time', ''],
    ['Display Time', 'Last', 'c'],
    ['Calculate Time History', 'Yes', ''],
    ['Identifier', '', 'g'],
    ['Suppressed', 'No', ''],
    ['Integration Point Results'],
    ['Display Option', 'Averaged', ''],
    ['Average Across Bodies', 'No', ''],
    ['Results'],
    ['Minimum', '113.17 MPa', 'gc'],
    ['Maximum', '1309.8 MPa', 'gc'],
    ['Average', '439.62 MPa', 'gc'],
    ['Minimum Occurs On', 'Solid1111', 'g'],
    ['Maximum Occurs On', 'Solid111', 'g'],
    ['Information']
];

class DetailsGrid extends Part
{
    row([name, value, flags])
    {
        if (value === undefined)
        {
            const plus = name === 'Information' ? 'M5.500 3v5' : '';
            return `<tr><td class="gut"><button aria-label="Toggle ${name}"><svg width="11" height="11"><path d="M.5.500h9v9h-9z" fill="#fff" stroke="#888"/><path d="M2 5.500h6${plus}" stroke="#000"/></svg></button></td><th colspan="2">${name}</th></tr>`;
        }
        const text = flags.includes('c') ? `<label><input type="checkbox">${name}</label>` : name;
        return `<tr><td class="gut"></td><td>${text}</td><td class="${flags.includes('g') ? 'grey' : ''}">${value}</td></tr>`;
    }

    render()
    {
        return `
        <style>
            :host { display: flex; flex-direction: column; flex: 1; background: #fff; color: #000; }
            table { border-collapse: collapse; table-layout: fixed; width: 288px; flex: none; }
            td, th { height: 21px; padding: 0 0 0 3px; border: 1px solid #a0a0a0; text-align: left; white-space: nowrap; overflow: hidden; }
            .gut { border: 0; padding: 0 0 0 2px; }
            .grey { background: #e6e4df; }
            button { display: block; }
            label { display: flex; align-items: center; gap: 8px; }
            input { appearance: none; width: 12px; height: 12px; margin: 0; border-color: #bbb; }
            .rest { flex: 1; width: 15px; margin-left: 272px; background: #f0f0f0; display: flex; align-items: flex-end; justify-content: center; padding-bottom: 5px; }
        </style>
        <table>
            <colgroup><col style="width:14px"><col style="width:127px"><col></colgroup>
            <tbody>${DETAILS.map(r => this.row(r)).join('')}</tbody>
        </table>
        <div class="rest"><svg width="9" height="6"><path d="M1 1l4 4 4-4" fill="none" stroke="#555" stroke-width="2"/></svg></div>`;
    }
}

class ToolButton extends Part
{
    render()
    {
        const pic = this.getAttribute('icon');
        const menu = this.hasAttribute('menu') ? `<i>${icon('caret')}</i>` : '';
        return `
        <style>
            :host { display: block; font-size: 12px; }
            button { display: flex; align-items: center; justify-content: center; min-width: 22px; height: 22px; white-space: nowrap; border: 1px solid transparent; }
            :host([on]) button { border-color: #3a96f5; }
            :host([on][menu]) button { width: 33px; gap: 5px; }
            i { color: #777; }
            span { margin-left: 3px; }
            span.none { display: none; }
        </style>
        <button ${this.textContent ? '' : `aria-label="${pic}"`}>${pic ? icon(pic) : ''}<span class="${this.textContent ? '' : 'none'}"><slot></slot></span>${menu}</button>`;
    }
}

const BAR = `
    .bar { display: flex; align-items: center; height: 27px; padding-left: 12px; font-size: 12px; background: #eeeef0; }
    .grip { width: 4px; height: 18px; margin-right: 10px; background: conic-gradient(from 270deg at 1px 1px, #999 90deg, transparent 0) 0 0 / 4px 4px, conic-gradient(from 270deg at 1px 1px, #999 90deg, transparent 0) 2px 2px / 4px 4px; }
    hr { width: 1px; height: 22px; border: 0; margin: 0 3px; background: #ccccd4; }
    .more { align-self: flex-end; margin: 0 0 5px 8px; }
`;
const tool = (...names) => names.map(n => `<tool-button icon="${n}"></tool-button>`).join('');
const MORE = `<svg class="more" width="8" height="5"><path d="M0 0h7l-3 4z" fill="#222"/></svg>`;

class ViewToolbar extends Part
{
    render()
    {
        return `
        <style>
            :host { display: block; flex: none; }
            ${BAR}
            .bar .grip { margin-right: 6px; }
            .text { padding: 0 6px; }
            .empty { padding: 0 3px 0 16px; }
            .wide { margin-right: 9px; }
        </style>
        <div class="bar">
            <i class="grip"></i>
            ${tool('zback', 'zfwd')}<hr>
            <tool-button on icon="shaded"></tool-button>${tool('shaded2', 'random')}<hr>${tool('layers')}<hr>
            <tool-button on menu icon="rotate"></tool-button>${tool('pan', 'zoom', 'zin', 'zfit', 'zsel')}<hr>
            <span class="text">Select</span>
            <tool-button class="wide" menu icon="mode">Mode</tool-button>
            ${tool('pickAll', 'pick1', 'pick2', 'pick3', 'pick4', 'mesh1', 'mesh2', 'mesh3', 'xyz', 'label', 'abc')}<hr>
            <tool-button menu icon="clipboard">Clipboard</tool-button>
            <span class="empty">[ Empty ]</span><hr>
            <tool-button class="wide" menu icon="extend">Extend</tool-button>
            <tool-button class="wide" menu icon="selectby">Select By</tool-button>
            <tool-button menu icon="convert">Convert</tool-button>
            ${MORE}
        </div>`;
    }
}

class StressView extends Part
{
    render()
    {
        const bands = ['#f00', '#ffb300', '#ff0', '#b3ff00', '#0f0', '#00ffb3', '#0ff', '#00b3ff', '#00f'];
        const values = ['1309.8 Max', '1176.8', '1043.9', '910.93', '777.97', '645.01', '512.05', '379.09', '246.13', '113.17 Min'];
        return `
        <style>
            :host { display: block; position: relative; background: #fff; color: #000; overflow: hidden; font-size: 10px; }
            .head { padding: 16px 0 0 16px; line-height: 16px; }
            .head b, .key b { font-size: 11px; }
            .legend { display: flex; padding: 14px 0 0 16px; gap: 9px; position: relative; }
            .bands { width: 16px; height: 162px; margin-top: 9px; border: 1px solid #000; display: flex; flex-direction: column; gap: 1px; background: #000; }
            .bands div { flex: 1; }
            .key { height: 178px; display: flex; flex-direction: column; }
            .key div { flex: 1; display: flex; align-items: center; }
            .plot { position: absolute; left: 0; top: 0; }
            .scale { position: absolute; left: 37%; bottom: 14px; width: 421px; }
            .scale p { display: flex; margin: 0 -53px; line-height: 14px; }
            .scale p span { flex: 1; text-align: center; white-space: nowrap; }
            .scale em { display: inline-block; width: 0; font-style: normal; }
            .scale .low { margin: 4px 0; }
            .rule { display: flex; height: 12px; border: 1px solid #000; }
            .rule i { flex: 1; }
            .rule i:nth-child(odd) { background: #000; }
            .triad { position: absolute; right: 0; bottom: 96px; }
        </style>
        <svg class="plot" width="640" height="520" aria-label="Equivalent stress contour">
            <defs>
                <linearGradient id="wall"><stop offset="0" stop-color="#4b0000"/><stop offset=".4" stop-color="#4b0000"/><stop offset=".41" stop-color="#4b2d00"/><stop offset=".5" stop-color="#4b4b00"/><stop offset=".6" stop-color="#2a4b00"/><stop offset=".75" stop-color="#004b3c"/><stop offset="1" stop-color="#003350"/></linearGradient>
            </defs>
            <g transform="translate(-2 0) scale(.40816 .33333)">
                <path fill="#00babb" d="M370 525L600 523 930 521 1300 503 1504 490 1506 530 1494 800 1487 980 1468 1165 1436 1454H900L640 1466 300 1488 308 1200Q316 1000 334 815z"/>
                <path fill="#004b4b" d="M300 1486L660 1465 900 1453H1436V1469H980L840 1473 660 1481 340 1502H300z"/>
                <path fill="#003350" d="M660 1465L900 1453H1075V1469H980L840 1473 660 1481z"/>
                <path fill="#0080bc" d="M727 523Q790 587 925 587 1060 585 1141 512L930 521z"/>
                <path fill="#0080bc" d="M660 1465Q740 1390 880 1387 990 1388 1075 1453H900z"/>
                <path fill="#00ba80" d="M690 810C700 785 740 780 780 786 830 800 860 832 910 832 960 832 1000 785 1060 774 1100 768 1140 775 1143 805 1140 850 1100 890 1060 895 1030 900 1010 910 1000 930L800 930C795 905 775 908 755 907 720 900 670 860 690 810z"/>
                <path fill="#00ba80" d="M660 1160C662 1120 700 1080 740 1077 770 1078 790 1060 800 1050H1000C1010 1070 1030 1068 1050 1067 1090 1070 1125 1105 1118 1150 1105 1185 1080 1195 1040 1192 980 1185 960 1150 900 1144 830 1144 800 1185 740 1200 700 1207 665 1195 660 1160z"/>
                <path fill="#0080bc" d="M336 817C355 825 365 840 378 855 400 885 415 898 445 904L550 910 650 922C700 930 720 936 750 934 775 928 790 928 800 938L790 1000 795 1050C780 1056 755 1056 728 1048 680 1056 620 1072 560 1082L450 1098C400 1105 375 1130 350 1160Q330 1182 309 1191 318 1000 336 817z"/>
                <path fill="#0080bc" d="M1494 785C1460 795 1440 825 1415 850 1390 872 1360 878 1300 890L1180 908C1130 918 1090 924 1060 920 1035 918 1020 924 1010 932V1038C1030 1048 1045 1048 1075 1040 1110 1048 1140 1056 1180 1064L1340 1074C1385 1080 1405 1100 1425 1128 1440 1150 1450 1158 1468 1165L1487 980z"/>
                <path fill="#0000bb" d="M750 955Q736 990 744 1028 690 1026 660 1020 630 1012 622 995 625 975 660 964 700 960 750 955zM1056 944L1064 949H1120Q1165 955 1177 978 1168 1002 1120 1014H1062L1052 1020Q1060 980 1056 944z"/>
                <path fill="#00ba00" d="M833 888C850 870 880 866 925 867 970 872 992 885 996 915L985 935H840zM803 1055L820 1085Q850 1108 890 1109 950 1106 970 1088L985 1050z"/>
                <path fill="#8cba00" d="M878 888Q925 875 965 893L984 912 900 925zM808 1060Q850 1098 890 1095 940 1092 984 1050z"/>
                <path fill="#c88600" d="M890 896Q925 886 960 905L970 915H890zM830 1066Q890 1105 955 1065z"/>
                <path fill="#bb0000" d="M895 904Q925 897 950 912L930 925H900zM848 1070Q890 1084 932 1070z"/>
                <path fill="#00babb" d="M764 968Q748 985 752 1003L764 1008zM1040 965Q1052 975 1046 998L1038 996z"/>
                <path fill="url(#wall)" d="M880 906C960 903 1042 930 1043 975L1020 975 880 930z"/>
                <path fill="#006a85" d="M822 927Q775 945 764 990L772 998 830 940z"/>
                <path fill="#fff" d="M762 1002C768 962 840 922 905 921 970 921 1036 950 1041 975 1040 1035 955 1074 890 1074 825 1072 766 1040 762 1002z"/>
                <path fill="#000" d="M1483 970h3v20h-3z"/>
                <path fill="#fff" stroke="#000" stroke-width="4" d="M901 918h16v15h-16z"/>
                <path fill="#f00" stroke="#000" stroke-width="3" d="M814 889H890L906 918 890 947H814z"/>
            </g>
            <text x="333" y="311" fill="#fff" font-size="11">Max</text>
        </svg>
        <div class="head"><b>A: Static Structural</b><br>Equivalent Stress<br>Type: Equivalent (von-Mises) Stress<br>Unit: MPa<br>Time: 1 s<br>2024/4/19 15:48</div>
        <div class="legend">
            <div class="bands">${bands.map(c => `<div style="background:${c}"></div>`).join('')}</div>
            <div class="key">${values.map(v => `<div>${/M/.test(v) ? `<b>${v}</b>` : v}</div>`).join('')}</div>
        </div>
        <div class="scale">
            <p><span>0.00</span><span></span><span>100.00</span><span></span><span>200.00<em>&nbsp;(mm)</em></span></p>
            <div class="rule"><i></i><i></i><i></i><i></i></div>
            <p class="low"><span>50.00</span><span>150.00</span></p>
        </div>
        <svg class="triad" width="130" height="100">
            <defs><radialGradient id="ball" cx=".4" cy=".35"><stop offset="0" stop-color="#1fe0e0"/><stop offset="1" stop-color="#008a8a"/></radialGradient></defs>
            <g transform="scale(.33333) translate(-870 -40)">
                <path d="M943 312L954 150" stroke="#008a00" stroke-width="14"/><path d="M957 111L977 155Q953 180 928 155z" fill="#009000"/><ellipse cx="953" cy="158" rx="25" ry="14" fill="#004800"/><path d="M950 155h10v30h-10z" fill="#008a00"/>
                <path d="M938 316L916 200" stroke="#00009a" stroke-width="15"/><path d="M906 150L940 182 936 200 908 210 888 194z" fill="#0000c0"/><path d="M906 150L908 210 888 194z" fill="#000070"/>
                <path d="M940 312L1135 307" stroke="#c00000" stroke-width="16"/><path d="M1131 282L1194 306 1131 332z" fill="#d00000"/><path d="M1131 308L1194 306 1131 332z" fill="#900000"/>
                <circle cx="1052" cy="139" r="26" fill="url(#ball)"/>
            </g>
            <text x="30" y="12" fill="#00a000">Y</text><text x="10" y="28" fill="#00f">Z</text><text x="121" y="88" fill="#f00">X</text>
        </svg>`;
    }
}

class GraphView extends Part
{
    render()
    {
        const ten = '<i></i>'.repeat(10);
        return `
        <style>
            :host { display: flex; flex-direction: column; flex: 1; background: #fff; color: #000; }
            ${BAR}
            .bar { color: #1e1e1e; }
            .bar hr { margin: 0 2px; }
            .combo { position: relative; }
            select { width: 100px; height: 23px; padding: 0 4px; display: block; }
            .combo svg { position: absolute; right: 4px; top: 8px; color: #777; }
            .bar input { width: 58px; height: 23px; padding: 0 3px; background: #eeeef0; color: #999; margin-right: 5px; }
            .area { display: grid; grid-template-columns: 20px 20px 11px 1fr; grid-template-rows: 66px 8px 34px 14px; padding: 24px 24px 0 0; font-size: 12px; font-weight: 700; }
            .unit { grid-column: 2; writing-mode: vertical-rl; rotate: 180deg; text-align: center; line-height: 20px; font-size: 13px; }
            .ticks { grid-column: 3; margin-left: 4px; display: flex; flex-direction: column; border-top: 1px solid #a9a9a9; }
            .ticks i { flex: 1; border-bottom: 1px solid #a9a9a9; }
            .box { grid-column: 4; border: 1px solid #a9a9a9; border-left-color: #e0e0e0; position: relative; }
            .box b { position: absolute; left: -2px; width: 3px; height: 3px; }
            .xticks { grid-column: 4; display: flex; border-left: 1px solid #a9a9a9; }
            .xticks i { flex: 1; border-right: 1px solid #a9a9a9; }
            .sec { grid-column: 4; text-align: center; line-height: 42px; }
            .range { grid-column: 4; border: 1px solid #a0a0a0; }
        </style>
        <div class="bar">
            <i class="grip"></i><span style="margin-right:5px">Animation</span>
            ${tool('prev', 'play')}<tool-button on icon="stop"></tool-button>${tool('next')}<hr>
            <tool-button on icon="barsG"></tool-button>${tool('barsB')}<hr>
            <div class="combo"><select aria-label="Frames"><option>20 Frames</option></select>${icon('caret')}</div>
            <div class="combo"><select aria-label="Duration"><option>2 Sec (Auto)</option></select>${icon('caret')}</div><hr>
            ${tool('export')}<hr>${tool('zplay', 'grid3', 'probe')}<hr>${tool('film', 'filmkey')}<hr>${tool('cycles')}
            <input value="3 Cycles" aria-label="Cycles" disabled><b>SA</b>${MORE}
        </div>
        <div class="area">
            <div class="unit">[MPa]</div>
            <div class="ticks">${ten}</div>
            <div class="box"><b style="top:-2px;background:#008a00"></b><b style="top:46px;background:#00c"></b><b style="bottom:-2px;background:#c00000"></b></div>
            <div class="xticks">${ten}</div>
            <div class="sec">[s]</div>
            <div class="range"></div>
        </div>`;
    }
}

class TabularData extends Part
{
    render()
    {
        const head = (name, color) => `<th><label style="color:${color}"><input type="checkbox" checked>${name} [MPa]</label></th>`;
        return `
        <style>
            :host { display: block; flex: 1; background: #a0a0a0; color: #000; }
            table { border-collapse: collapse; table-layout: fixed; width: 401px; }
            th, td { height: 18px; padding: 0 0 0 3px; text-align: left; font-weight: 400; white-space: nowrap; border: solid #c0c0c0; border-width: 0 1px 1px 0; background: #e6e4df; }
            th { background: #f0f0f0; border-color: #707070; }
            label { display: flex; align-items: center; gap: 5px; }
            input { appearance: none; width: 13px; height: 13px; margin: 0; border: 1px solid #555; border-width: 2px 1px 1px 2px; position: relative; }
            input::before { content: ""; position: absolute; left: 3px; top: 0; width: 4px; height: 7px; border: solid #000; border-width: 0 2px 2px 0; rotate: 40deg; }
        </style>
        <table>
            <colgroup><col style="width:15px"><col style="width:50px"><col style="width:114px"><col style="width:115px"><col></colgroup>
            <tr><th></th><th>Time [s]</th>${head('Minimum', '#c80000')}${head('Maximum', '#008a00')}${head('Average', '#0000c8')}</tr>
            <tr><th>1</th><td>1.</td><td>113.17</td><td>1309.8</td><td>439.62</td></tr>
        </table>`;
    }
}

class StatusBar extends Part
{
    render()
    {
        return `
        <style>
            :host { display: flex; justify-content: flex-end; align-items: center; gap: 17px; height: 21px; flex: none; padding: 2px 8px 0 0; background: #007acc; color: #fff; font-size: 13px; }
            span { display: flex; align-items: center; gap: 1px; }
        </style>
        <span><svg width="16" height="16"><path d="M1 3h12v8H7l-4 4v-4H1z" fill="#f5c542"/><ellipse cx="10" cy="5" rx="3" ry="4" fill="#f5c542" stroke="#222" stroke-width="1.500"/></svg>No Messages</span>
        <span>No Selection</span>
        <span><svg width="16" height="12"><path d="M3 7h10L8 2z" fill="#fff"/></svg>Metric (mm, kg, N, s, mV, mA)</span>
        <span>Degrees</span><span>rad/s</span><span>Celsius</span>`;
    }
}

const APPS = [
    ['Start', 'plain', `<path fill="#fff" d="M4 6l6-1v7H4zM11 5l9-1v8h-9zM4 13h6v7l-6-1zM11 13h9v8l-9-1z"/>`],
    ['Calculator', '', `<path fill="#7d8690" d="M3 0h18v24H3z"/><path fill="#3fd0f5" d="M5 2h14v4H5z"/><path d="M5 10h14M5 15h9M5 20h9" stroke="#e8eaec" stroke-width="4" stroke-dasharray="4 1"/><path fill="#1c4f8c" d="M15 13h4v10h-4z"/>`],
    ['Chrome', '', `<circle cx="12" cy="12" r="12" fill="#fbc116"/><path fill="#ea4335" d="M1.600 6A12 12 0 0 1 22.400 6H12L6 14z"/><path fill="#34a853" d="M1.600 6A12 12 0 0 0 11 24l6-9-9 0z"/><circle cx="12" cy="12" r="6" fill="#fff"/><circle cx="12" cy="12" r="4.500" fill="#3b7ded"/>`],
    ['ZY', 'plain', `<path fill="#c33a1e" d="M0 3q6-2 12 1v17q-6-2-12 0z"/><path fill="#173b66" d="M24 3q-6-2-12 1v17q6-2 12 0z"/><text x="12" y="17" text-anchor="middle" font-size="14" font-weight="700" fill="#fff">ZY</text>`],
    ['Explorer', '', `<path fill="#e8a317" d="M1 3h9l2 3h11v4H1z"/><path fill="#fcd568" d="M1 6h22v15H1z"/><path fill="#3f92dc" d="M4 13h16v9h-4v-4H8v4H4z"/>`],
    ['UltraEdit', '', `<circle cx="12" cy="12" r="11" fill="#a98422" stroke="#6b5210"/><text x="12" y="16" text-anchor="middle" font-size="12" font-weight="700" font-style="italic" fill="#1c1606">UE</text>`],
    ['Umbrella', '', `<path fill="#8edb1c" d="M2 13L20 2l-6 8z"/><path fill="#5fae12" d="M20 2l1 17-9-6 2-3z"/><path fill="#76c81c" d="M2 13l12-3-2 4z"/><path d="M12 13q3 4 1 7-3 3-6 0" fill="none" stroke="#76c81c" stroke-width="2"/>`],
    ['Edge', '', `<circle cx="12" cy="12" r="12" fill="#0c70c8"/><path fill="#3fd0a0" d="M1 8Q5 0 13 0q11 1 11 11 0 5-6 5-5 0-3-4 0-5-6-5-5 0-8 4z"/><path fill="#1b1b1b" d="M14 12q-1 5 4 6 4 0 6-3-1 3-4 5-8 0-10-6 0-3 4-2z"/><path fill="#1a4f9c" d="M8 10q-3 8 5 14Q2 24 1 14q2-4 7-4z"/>`],
    ['WPS', '', `<path d="M1 6h7l4 13 5-13h6l-6 14h-3L9 8M2 6l5 14h3l4-9" fill="none" stroke="#f0391f" stroke-width="3"/>`],
    ['Youdao', '', `<rect width="24" height="24" rx="4" fill="#f5163f"/><text x="12" y="17" text-anchor="middle" font-size="15" font-weight="700" fill="#fff">yd</text>`],
    ['Todesk', '', `<rect width="24" height="24" rx="4" fill="#fff"/><path fill="#1677ff" d="M9 4h12v6q0 4-4 6V9H7q0-4 2-5z"/><path fill="#20a5e8" d="M3 10h11v11q-5-1-5-5v-2Q3 13 3 10z"/>`],
    ['Resource Monitor', '', `<path fill="#d5dadd" d="M3 2l17 1 2 14-18-1z"/><path fill="#fff" stroke="#889" d="M4 4h15v10H4z"/><path d="M5 11l3-4 2 5 3-7 2 6 3-2" fill="none" stroke="#2a7ab8"/><path fill="#b0b6ba" d="M8 17h10l3 5H6z"/>`],
    ['QQ Music', '', `<circle cx="12" cy="12" r="12" fill="#ffdc00"/><path fill="#12b060" d="M10 2q8 2 7 6-2-2-4-1l1 9q0 5-4 5-5-1-3-5 2-3 5-2z"/>`],
    ['Workbench', '', `<path fill="#000" d="M0 0h24v24H0z"/><path d="M12 1l3 2v3l-3 2-3-2V3zM8 8l3 2v3l-3 2-3-2v-3zM16 8l3 2v3l-3 2-3-2v-3z" fill="none" stroke="#f5a81c" stroke-width="1.500"/><text x="12" y="22" text-anchor="middle" font-size="8" font-weight="700" fill="#fff">WB</text>`],
    ['WeChat', '', `<ellipse cx="9" cy="9" rx="9" ry="8" fill="#2ac85b"/><path fill="#2ac85b" d="M3 14l-1 5 6-3z"/><ellipse cx="17" cy="16" rx="7" ry="6" fill="#eee"/><path fill="#eee" d="M19 20l3 3v-4z"/><path d="M6 6v2M12 6v2" stroke="#147a34" stroke-width="2"/><path d="M15 14v1M19 14v1" stroke="#888" stroke-width="2"/>`],
    ['Mechanical', 'now', `<path fill="#000" d="M0 0h24v24H0z"/><circle cx="9" cy="10" r="3.500" fill="none" stroke="#f5a81c" stroke-width="2"/><circle cx="9" cy="10" r="5" fill="none" stroke="#f5a81c" stroke-dasharray="2 2"/><circle cx="16" cy="4" r="2.500" fill="none" stroke="#f5a81c" stroke-width="2"/><text x="12" y="22" text-anchor="middle" font-size="8" font-weight="700" fill="#fff">M</text>`]
];

class TaskBar extends Part
{
    render()
    {
        return `
        <style>
            :host { display: flex; align-items: stretch; height: 40px; flex: none; background: #1b1b1b; color: #fff; position: relative; font-size: 13px; }
            .app { width: 49px; display: flex; align-items: center; justify-content: center; position: relative; }
            .app::before { content: ""; position: absolute; left: 5px; right: 4px; bottom: 0; height: 2px; background: #76b9ed; }
            .app:first-of-type { width: 50px; }
            .plain::before { display: none; }
            .now { background: #4a4a4a; }
            .now::before { left: 0; right: 0; }
            .tray { margin-left: auto; display: flex; align-items: center; }
            .weather { display: flex; align-items: center; gap: 8px; margin-right: 25px; font-size: 14px; }
            .icons { display: flex; align-items: center; gap: 11px; margin-right: 10px; }
            .clock { width: 72px; text-align: center; font-size: 12px; line-height: 19px; margin-right: 10px; }
            .note { margin-right: 19px; }
            .end { width: 1px; align-self: stretch; background: #666; margin-right: 4px; }
            .mark { position: absolute; right: 16px; top: 8px; font: 20px/24px "Noto Sans", "Noto Sans CJK SC", sans-serif; color: rgba(255, 255, 255, .55); white-space: nowrap; }
        </style>
        ${APPS.map(([name, cls, body]) => `<button class="app ${cls}" aria-label="${name}"><svg width="24" height="24" viewBox="0 0 24 24">${body}</svg></button>`).join('')}
        <div class="tray">
            <div class="weather">
                <svg width="25" height="24"><path d="M5 23a5 5 0 0 1 0-9 7 7 0 0 1 13 0 4.500 4.500 0 0 1 1 9z" fill="#b9d5fb"/><path d="M3 20h20q-1 3-4 3H5z" fill="#e6f0ff"/><circle cx="18" cy="6" r="6" fill="#c42b1c"/><text x="18" y="9" text-anchor="middle" font-size="9" fill="#fff">1</text></svg>
                <span>16°C</span><span>多云</span>
            </div>
            <div class="icons">
                <svg width="13" height="8"><path d="M1 7l5-5 6 5" fill="none" stroke="#fff" stroke-width="1.500"/></svg>
                <svg width="16" height="14"><path d="M1 5h2l4-4v12L3 9H1zM9 5q2 2 0 4M11 3q4 4 0 8M13 1q5 6 0 12" fill="none" stroke="#fff"/></svg>
                <svg width="16" height="14"><path d="M1 13Q1 2 14 1M5 13Q5 6 14 5M9 13Q9 9 14 9" fill="none" stroke="#fff" stroke-width="1.300"/></svg>
                <span>中</span>
                <svg width="16" height="15"><path fill="#f4511e" d="M2 0h12l2 13-14 2-2-12z"/><path d="M12 4q-7-2-7 1t6 2-1 4-6-1" fill="none" stroke="#fff" stroke-width="2"/></svg>
            </div>
            <div class="clock">15:48<br>2024/4/19</div>
            <svg class="note" width="18" height="17"><path d="M1 1h16v12h-4v3l-4-3H1z" fill="none" stroke="#fff" stroke-width="1.300"/></svg>
            <i class="end"></i>
        </div>
        <div class="mark">CSDN @笨鸟不想飞~</div>`;
    }
}

class SpeedMeter extends Part
{
    render()
    {
        return `
        <style>
            :host { position: absolute; right: 126px; bottom: 86px; width: 119px; height: 60px; color: #fff; }
            .pill { position: absolute; left: 32px; right: 0; top: 9px; height: 42px; border-radius: 0 21px 21px 0; background: #282c35; box-shadow: 0 0 4px rgba(0, 0, 0, .5); padding-left: 30px; }
            .pill div { display: flex; align-items: center; height: 21px; font-size: 12px; border-bottom: 1px solid #20242c; }
            .pill div:last-child { border: 0; }
            .pill b { width: 25px; text-align: right; font-weight: 600; }
            .pill small { font-size: 11px; color: #999; }
            .dial { position: absolute; left: 0; top: 0; filter: drop-shadow(0 0 2px rgba(0, 0, 0, .5)); }
        </style>
        <div class="pill">
            <div><svg width="8" height="8"><path d="M4 8V1M1 4l3-3 3 3" fill="none" stroke="#3db5f5" stroke-width="1.500"/></svg><b>0.6</b><small>K/s</small></div>
            <div><svg width="8" height="8"><path d="M4 0v7M1 4l3 3 3-3" fill="none" stroke="#1fae3a" stroke-width="1.500"/></svg><b>0</b><small>K/s</small></div>
        </div>
        <svg class="dial" width="60" height="60">
            <defs><linearGradient id="arc" x2="0" y2="1"><stop offset="0" stop-color="#3ad6d6"/><stop offset=".6" stop-color="#7ddc9a"/><stop offset="1" stop-color="#c8dc50"/></linearGradient></defs>
            <circle cx="30" cy="30" r="29" fill="#484c5a" stroke="#2c303a"/>
            <path d="M30 5A25 25 0 0 1 33 55" fill="none" stroke="url(#arc)" stroke-width="2"/>
            <text x="13" y="37" font-size="24" font-weight="300" fill="#fff">48</text>
            <text x="41" y="38" font-size="9" fill="#fff">%</text>
        </svg>`;
    }
}

customElements.define('title-bar', TitleBar);
customElements.define('ribbon-bar', RibbonBar);
customElements.define('ribbon-group', RibbonGroup);
customElements.define('ribbon-stack', RibbonStack);
customElements.define('ribbon-button', RibbonButton);
customElements.define('solve-options', SolveOptions);
customElements.define('dock-panel', DockPanel);
customElements.define('outline-tree', OutlineTree);
customElements.define('details-grid', DetailsGrid);
customElements.define('tool-button', ToolButton);
customElements.define('view-toolbar', ViewToolbar);
customElements.define('stress-view', StressView);
customElements.define('graph-view', GraphView);
customElements.define('tabular-data', TabularData);
customElements.define('status-bar', StatusBar);
customElements.define('task-bar', TaskBar);
customElements.define('speed-meter', SpeedMeter);
</script>
</body>
</html>
